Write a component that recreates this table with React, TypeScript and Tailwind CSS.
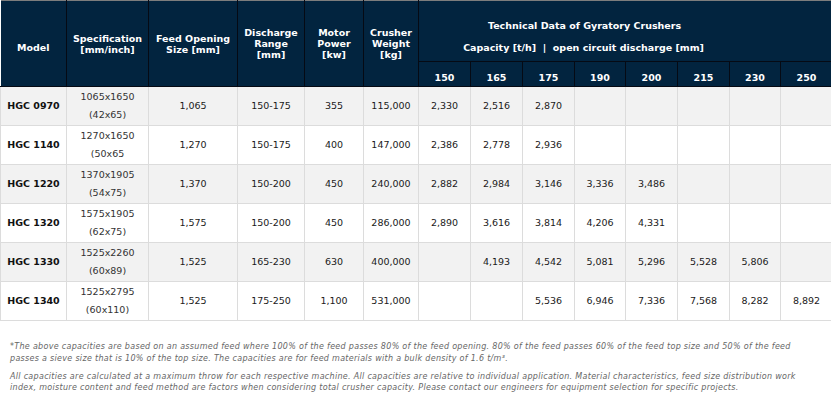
const caps = ['150', '165', '175', '190', '200', '215', '230', '250']

const rows = [
  { model: 'HGC 0970', spec: ['1065x1650', '(42x65)'], feed: '1,065', range: '150-175', power: '355', weight: '115,000', cap: ['2,330', '2,516', '2,870', '', '', '', '', ''] },
  { model: 'HGC 1140', spec: ['1270x1650', '(50x65'], feed: '1,270', range: '150-175', power: '400', weight: '147,000', cap: ['2,386', '2,778', '2,936', '', '', '', '', ''] },
  { model: 'HGC 1220', spec: ['1370x1905', '(54x75)'], feed: '1,370', range: '150-200', power: '450', weight: '240,000', cap: ['2,882', '2,984', '3,146', '3,336', '3,486', '', '', ''] },
  { model: 'HGC 1320', spec: ['1575x1905', '(62x75)'], feed: '1,575', range: '150-200', power: '450', weight: '286,000', cap: ['2,890', '3,616', '3,814', '4,206', '4,331', '', '', ''] },
  { model: 'HGC 1330', spec: ['1525x2260', '(60x89)'], feed: '1,525', range: '165-230', power: '630', weight: '400,000', cap: ['', '4,193', '4,542', '5,081', '5,296', '5,528', '5,806', ''] },
  { model: 'HGC 1340', spec: ['1525x2795', '(60x110)'], feed: '1,525', range: '175-250', power: '1,100', weight: '531,000', cap: ['', '', '5,536', '6,946', '7,336', '7,568', '8,282', '8,892'] },
]

const widths = [66, 82, 89, 67, 59, 55, 52, 52, 52, 51, 52, 52, 51, 52]

export default function App() {
  return (
    <div className="w-[831px] bg-white" style={{ fontFamily: '"DejaVu Sans", Verdana, sans-serif' }}>
      <table className="w-[831px] table-fixed border-collapse">
        <colgroup>
          {widths.map((w, i) => (
            <col key={i} style={{ width: w }} />
          ))}
        </colgroup>
        <thead className="bg-[#02243f] text-white text-[9.5px] font-bold leading-[11px]">
          <tr className="h-[61px] border-t border-[#7d7d7d]">
            <th rowSpan={2} className="border-r border-b border-[#050a14] pt-[8px] align-middle">Model</th>
            <th rowSpan={2} className="border-r border-b border-[#050a14] align-middle">Specification<br />[mm/inch]</th>
            <th rowSpan={2} className="border-r border-b border-[#050a14] align-middle">Feed Opening<br />Size [mm]</th>
            <th rowSpan={2} className="border-r border-b border-[#050a14] align-middle">Discharge<br />Range<br />[mm]</th>
            <th rowSpan={2} className="border-r border-b border-[#050a14] align-middle">Motor<br />Power<br />[kw]</th>
            <th rowSpan={2} className="border-r border-b border-[#050a14] align-middle">Crusher<br />Weight<br />[kg]</th>
            <th colSpan={8} className="border-r border-b border-[#050a14] align-top pt-[19px] pr-[84px]">
              <div className="pl-[2px]">Technical Data of Gyratory Crushers</div>
              <div className="mt-[11px]">Capacity [t/h]&nbsp; |&nbsp; open circuit discharge [mm]</div>
            </th>
          </tr>
          <tr className="h-[25px]">
            {caps.map((c) => (
              <th key={c} className="border-r border-b border-[#050a14] pt-[6px] align-middle">{c}</th>
            ))}
          </tr>
        </thead>
        <tbody className="text-[9.5px] text-[#1a1a1a] leading-[18px]">
          {rows.map((r, i) => (
            <tr key={r.model} className={`h-[39px] ${i % 2 === 0 ? 'bg-[#f2f2f2]' : 'bg-white'}`}>
              <td className="border border-[#dcdcdc] text-center font-bold text-[#111]">{r.model}</td>
              <td className="border border-[#dcdcdc] text-center text-[#333] py-[1px]">
                <div>{r.spec[0]}</div>
                <div>{r.spec[1]}</div>
              </td>
              <td className="border border-[#dcdcdc] text-center">{r.feed}</td>
              <td className="border border-[#dcdcdc] text-center">{r.range}</td>
              <td className="border border-[#dcdcdc] text-center">{r.power}</td>
              <td className="border border-[#dcdcdc] text-center">{r.weight}</td>
              {r.cap.map((c, j) => (
                <td key={j} className="border border-[#dcdcdc] text-center">{c}</td>
              ))}
            </tr>
          ))}
        </tbody>
      </table>

      <div className="px-[10px] pt-[20px] pb-[8px] text-[8px] italic text-[#666] leading-[12px] tracking-[0.3px] w-[820px]">
        <p>
          *The above capacities are based on an assumed feed where 100% of the feed passes 80% of the feed opening. 80% of the feed passes 60% of the feed top size and 50% of the feed passes a sieve size that is 10% of the top size. The capacities are for feed materials with a bulk density of 1.6 t/m³.
        </p>
        <p className="mt-[6px] leading-[11px]">
          All capacities are calculated at a maximum throw for each respective machine. All capacities are relative to individual application. Material characteristics, feed size distribution work index, moisture content and feed method are factors when considering total crusher capacity. Please contact our engineers for equipment selection for specific projects.
        </p>
      </div>
    </div>
  )
}
